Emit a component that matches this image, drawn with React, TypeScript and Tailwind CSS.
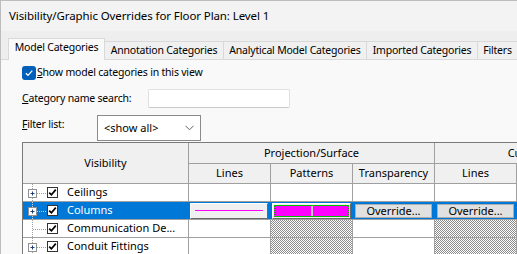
import React from "react";

const tabs = [
  { label: "Model Categories", w: "w-[97px]", active: true },
  { label: "Annotation Categories", w: "w-[119px]", active: false },
  { label: "Analytical Model Categories", w: "w-[143px]", active: false },
  { label: "Imported Categories", w: "w-[111px]", active: false },
  { label: "Filters", w: "w-[40px]", active: false },
];

function Tree({ plus, selected }: { plus: boolean; selected?: boolean }) {
  const dot = selected ? "#d0d0d0" : "#a0a0a0";
  return (
    <svg width="24" height="18" viewBox="0 0 24 18" className="shrink-0">
      <line x1="9.5" y1="0" x2="9.5" y2="18" stroke={dot} strokeDasharray="1 1" />
      <line x1="10" y1="9.5" x2="24" y2="9.5" stroke={dot} strokeDasharray="1 1" />
      {plus && (
        <>
          <rect x="5.5" y="5.5" width="8" height="8" fill="#fff" stroke="#919191" />
          <line x1="7.5" y1="9.5" x2="11.5" y2="9.5" stroke="#1f3f7f" />
          <line x1="9.5" y1="7.5" x2="9.5" y2="11.5" stroke="#1f3f7f" />
        </>
      )}
    </svg>
  );
}

function Check() {
  return (
    <div className="w-[11px] h-[11px] shrink-0 border border-[#333333] bg-white flex items-center justify-center">
      <svg width="9" height="9" viewBox="0 0 9 9">
        <path d="M1.2 4.6 L3.4 6.8 L7.8 1.6" fill="none" stroke="#000" strokeWidth="1.7" />
      </svg>
    </div>
  );
}

function OverrideBtn() {
  return (
    <div className="h-full flex items-center pl-[2px] pr-[3px]">
      <div className="w-full h-[14px] bg-[#e1e1e1] border border-[#adadad] flex items-center justify-center text-black leading-none">
        Override...
      </div>
    </div>
  );
}

const hatch =
  "bg-[repeating-conic-gradient(#8c8c8c_0%_25%,#ffffff_0%_50%)] bg-[length:2px_2px]";

const cell = "border-r border-b border-[#a0a0a0]";
const head = `${cell} bg-[#f0f0f0] flex items-center justify-center whitespace-nowrap`;

export default function App() {
  return (
    <div className="w-[517px] h-[254px] overflow-hidden bg-[#f9f9f9] border-l border-t border-[#bdbdbd] font-['Noto_Sans','Segoe_UI',sans-serif] text-[11px] text-[#1a1a1a]">
      <div className="h-[30px] bg-[#f3f3f3] flex items-center pl-[8px] text-[11.5px] tracking-[-0.1px] text-black whitespace-nowrap">
        Visibility/Graphic Overrides for Floor Plan: Level 1
      </div>
      <div className="h-[29px] bg-[#eeeeee] flex items-end text-[10.5px] tracking-[-0.2px] whitespace-nowrap">
        <div className="w-[7px] h-px shrink-0 bg-[#d9d9d9]" />
        {tabs.map((t) =>
          t.active ? (
            <div
              key={t.label}
              className={`${t.w} h-[22px] shrink-0 bg-[#f9f9f9] border-l border-t border-r border-[#d9d9d9] flex items-center justify-center pb-[3px] text-black`}
            >
              {t.label}
            </div>
          ) : (
            <div
              key={t.label}
              className={`${t.w} h-[19px] shrink-0 bg-[#f0f0f0] border-t border-r border-b border-[#d9d9d9] flex items-center justify-center text-black`}
            >
              {t.label}
            </div>
          )
        )}
        <div className="flex-1 h-px bg-[#d9d9d9]" />
      </div>

      <div className="pl-[21px] pt-[6px] flex flex-col">
        <div className="flex items-center h-[14px] gap-[1px] text-[10.5px] tracking-[-0.2px]">
          <div className="w-[14px] h-[14px] rounded-[3px] bg-[#005fb8] flex items-center justify-center">
            <svg width="10" height="10" viewBox="0 0 10 10">
              <path d="M1.8 5.2 L4 7.3 L8.3 2.6" fill="none" stroke="#fff" strokeWidth="1.2" />
            </svg>
          </div>
          <span className="text-black">
            <span className="underline">S</span>how model categories in this view
          </span>
        </div>

        <div className="flex items-center mt-[9px] h-[19px] text-[10.5px] tracking-[-0.2px]">
          <span className="w-[126px] text-black">
            <span className="underline">C</span>ategory name search:
          </span>
          <div className="w-[142px] h-[19px] bg-white border border-[#e0e0e0] border-b-[#c8c8c8] rounded-[2px]" />
        </div>

        <div className="flex items-center mt-[7px] h-[26px]">
          <span className="w-[75px] text-black self-start mt-[2px] text-[10.5px] tracking-[-0.2px]">
            <span className="underline">F</span>ilter list:
          </span>
          <div className="w-[104px] h-[26px] bg-white border border-[#8a8a8a] flex items-center justify-between pl-[6px] pr-[6px] text-black">
            <span>&lt;show all&gt;</span>
            <svg width="9" height="6" viewBox="0 0 9 6">
              <path d="M0.5 0.8 L4.5 4.8 L8.5 0.8" fill="none" stroke="#606060" strokeWidth="1" />
            </svg>
          </div>
        </div>

        <div className="mt-px grid grid-cols-[166px_82px_82px_82px_82px_82px] grid-rows-[21px_20px_18px_18px_18px_18px] w-max border-t border-l border-[#7a7a7a] text-black">
          <div className={`${head} row-span-2`}>Visibility</div>
          <div className={`${head} col-span-3`}>Projection/Surface</div>
          <div className={`${head} col-span-2`}>Cut</div>

          <div className={head}>Lines</div>
          <div className={head}>Patterns</div>
          <div className={head}>Transparency</div>
          <div className={head}>Lines</div>
          <div className={head} />

          {/* Ceilings */}
          <div className={`${cell} bg-white flex items-center`}>
            <Tree plus />
            <Check />
            <span className="ml-[9px]">Ceilings</span>
          </div>
          <div className={`${cell} bg-white`} />
          <div className={`${cell} bg-white`} />
          <div className={`${cell} bg-white`} />
          <div className={`${cell} bg-white`} />
          <div className={`${cell} bg-white`} />

          {/* Columns - selected */}
          <div className="border-b border-[#a0a0a0] bg-[#0078d7] flex items-center text-white">
            <Tree plus selected />
            <Check />
            <span className="ml-[9px]">Columns</span>
          </div>
          <div className="border-b border-[#a0a0a0] bg-[#0078d7] flex items-center pl-px pr-[3px]">
            <div className="w-full h-[16px] bg-[#f0f0f0] border border-white border-r-[#696969] border-b-[#696969] flex items-center px-[4px]">
              <div className="w-full h-px bg-[#ff00ff]" />
            </div>
          </div>
          <div className="border-b border-[#a0a0a0] bg-[#0078d7] flex items-center pl-px pr-[2px]">
            <div className="w-full h-[16px] bg-[#f0f0f0] border border-white border-r-[#696969] border-b-[#696969] p-px">
              <div className="w-full h-full border border-dotted border-[#00c000] bg-[#ff00ff] flex justify-center">
                <div className="w-[2px] h-full bg-[#c8c8c8]" />
              </div>
            </div>
          </div>
          <div className="border-b border-[#a0a0a0] bg-[#0078d7]">
            <OverrideBtn />
          </div>
          <div className="border-b border-[#a0a0a0] bg-[#0078d7]">
            <OverrideBtn />
          </div>
          <div className="border-b border-[#a0a0a0] bg-[#0078d7]" />

          {/* Communication Devices */}
          <div className={`${cell} bg-white flex items-center`}>
            <Tree plus={false} />
            <Check />
            <span className="ml-[9px]">Communication De...</span>
          </div>
          <div className={`${cell} bg-white`} />
          <div className={`${cell} ${hatch}`} />
          <div className={`${cell} bg-white`} />
          <div className={`${cell} ${hatch}`} />
          <div className={`${cell} ${hatch}`} />

          {/* Conduit Fittings */}
          <div className={`${cell} bg-white flex items-center`}>
            <Tree plus />
            <Check />
            <span className="ml-[9px]">Conduit Fittings</span>
          </div>
          <div className={`${cell} bg-white`} />
          <div className={`${cell} ${hatch}`} />
          <div className={`${cell} bg-white`} />
          <div className={`${cell} ${hatch}`} />
          <div className={`${cell} ${hatch}`} />
        </div>
      </div>
    </div>
  );
}
